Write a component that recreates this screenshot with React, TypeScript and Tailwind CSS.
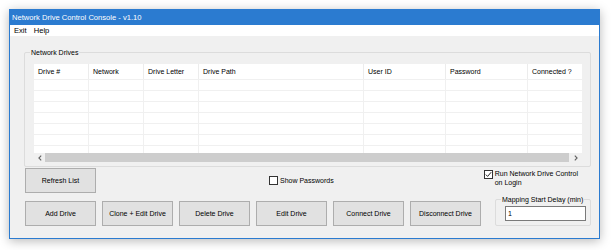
import React from "react";

const columns = [
  { name: "Drive #", w: "w-[55px]" },
  { name: "Network", w: "w-[55px]" },
  { name: "Drive Letter", w: "w-[55px]" },
  { name: "Drive Path", w: "w-[165px]" },
  { name: "User ID", w: "w-[82px]" },
  { name: "Password", w: "w-[82px]" },
  { name: "Connected ?", w: "flex-1" },
];

const rows = [0, 1, 2, 3, 4, 5, 6];

function Button({ label }: { label: string }) {
  return (
    <div className="w-[71px] h-[25px] flex items-center justify-center bg-[#e1e1e1] border border-[#adadad] text-black whitespace-nowrap">
      {label}
    </div>
  );
}

function CheckBox({ checked }: { checked?: boolean }) {
  return (
    <div className="w-[9px] h-[9px] border border-[#333] bg-white flex items-center justify-center shrink-0">
      {checked && (
        <svg width="7" height="7" viewBox="0 0 7 7">
          <path d="M0.8 3.6 L2.6 5.4 L6.2 1.2" stroke="#222" strokeWidth="1" fill="none" />
        </svg>
      )}
    </div>
  );
}

function Arrow({ dir }: { dir: "left" | "right" }) {
  return (
    <svg width="4" height="6" viewBox="0 0 4 6">
      <path
        d={dir === "left" ? "M3.2 0.6 L0.9 3 L3.2 5.4" : "M0.8 0.6 L3.1 3 L0.8 5.4"}
        stroke="#606060"
        strokeWidth="1.1"
        fill="none"
      />
    </svg>
  );
}

export default function App() {
  return (
    <div
      className="w-[611px] h-[250px] bg-white pt-[9px] pl-[9px] overflow-hidden text-[7px] leading-none whitespace-nowrap"
      style={{ fontFamily: '"Liberation Sans", Arial, sans-serif' }}
    >
      <div className="w-[591px] h-[230px] border border-[#2b7bd0] bg-[#f0f0f0] flex flex-col shadow-[0_2px_10px_rgba(0,0,0,0.28)]">
        {/* title bar */}
        <div className="h-[15px] bg-[#2b7bd0] text-white text-[7.6px] flex items-center pl-[2px] shrink-0">
          Network Drive Control Console - v1.10
        </div>
        {/* menu */}
        <div className="h-[11px] bg-white flex items-center gap-[7px] pl-[4px] text-[7.6px] text-black shrink-0">
          <span>Exit</span>
          <span>Help</span>
        </div>

        {/* body */}
        <div className="flex flex-col pl-[14px] pr-[8px] pt-[16px]">
          {/* Network Drives group */}
          <div className="relative h-[115px] border border-[#dcdcdc] rounded-[2px] pt-[11px] pl-[9px] pr-[8px]">
            <span className="absolute -top-[4px] left-[5px] px-[1px] bg-[#f0f0f0] text-black">Network Drives</span>
            <div className="bg-white h-[98px] flex flex-col">
              {/* header */}
              <div className="h-[15px] flex shrink-0">
                {columns.map((c, i) => (
                  <div
                    key={c.name}
                    className={`${c.w} h-full flex items-center pl-[4px] text-black ${i < columns.length - 1 ? "border-r border-[#ececec]" : ""}`}
                  >
                    {c.name}
                  </div>
                ))}
              </div>
              {/* rows */}
              <div className="flex-1 overflow-hidden flex flex-col">
                {rows.map((r) => (
                  <div key={r} className="h-[11px] flex shrink-0 border-t border-[#f0f0f0]">
                    {columns.map((c, i) => (
                      <div
                        key={c.name}
                        className={`${c.w} h-full ${i < columns.length - 1 ? "border-r border-[#f0f0f0]" : ""}`}
                      />
                    ))}
                  </div>
                ))}
              </div>
              {/* horizontal scrollbar */}
              <div className="h-[9px] bg-[#f0f0f0] flex items-center shrink-0">
                <div className="w-[11px] h-full flex items-center justify-center">
                  <Arrow dir="left" />
                </div>
                <div className="flex-1 h-full bg-[#cdcdcd]" />
                <div className="w-[13px] h-full flex items-center justify-center">
                  <Arrow dir="right" />
                </div>
              </div>
            </div>
          </div>

          {/* first control row */}
          <div className="flex items-center h-[25px] mt-[1px] pl-[1px]">
            <Button label="Refresh List" />
            <div className="flex items-center gap-[2px] ml-[173px]">
              <CheckBox />
              <span className="text-black">Show Passwords</span>
            </div>
            <div className="flex items-start gap-[2px] ml-[150px] -mt-[5px]">
              <div className="mt-[1px]">
                <CheckBox checked />
              </div>
              <span className="text-black leading-[9px]">
                Run Network Drive Control
                <br />
                on Login
              </span>
            </div>
          </div>

          {/* second control row */}
          <div className="flex items-end mt-[6px] pl-[1px]">
            <div className="flex gap-[6px]">
              <Button label="Add Drive" />
              <Button label="Clone + Edit Drive" />
              <Button label="Delete Drive" />
              <Button label="Edit Drive" />
              <Button label="Connect Drive" />
              <Button label="Disconnect Drive" />
            </div>
            <div className="relative ml-[14px] w-[97px] h-[27px] border border-[#dcdcdc] rounded-[2px] pt-[6px] pl-[9px]">
              <span className="absolute -top-[4px] left-[5px] px-[1px] bg-[#f0f0f0] text-black">Mapping Start Delay (min)</span>
              <div className="w-[81px] h-[15px] bg-white border border-[#7a7a7a] flex items-center pl-[2px] text-black">1</div>
            </div>
          </div>
        </div>
      </div>
    </div>
  );
}
